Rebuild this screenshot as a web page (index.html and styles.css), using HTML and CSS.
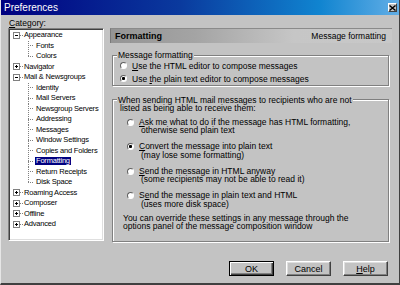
FILE: index.html
```html
<!DOCTYPE html>
<html>
<head>
    <title>Preferences</title>
    <link rel="stylesheet" href="styles.css">
</head>
<body>
    <div class="window">
        <div class="titlebar">
            <span class="title">Preferences</span>
            <span class="close">
                <svg width="7" height="6" viewBox="0 0 7 6"><path d="M0.5 0.5L6.5 5.5M6.5 0.5L0.5 5.5" stroke="#000" stroke-width="1.4"/></svg>
            </span>
        </div>

        <div class="main">
            <div class="sidebar">
                <div class="cat-label"><u>C</u>ategory:</div>
                <ul class="tree">
                    <li class="row top"><span class="exp open"></span><span class="stub"></span><span class="label">Appearance</span></li>
                    <li class="row child"><span class="label">Fonts</span></li>
                    <li class="row child last"><span class="label">Colors</span></li>
                    <li class="row top"><span class="exp"></span><span class="stub"></span><span class="label">Navigator</span></li>
                    <li class="row top"><span class="exp open"></span><span class="stub"></span><span class="label">Mail &amp; Newsgroups</span></li>
                    <li class="row child"><span class="label">Identity</span></li>
                    <li class="row child"><span class="label">Mail Servers</span></li>
                    <li class="row child"><span class="label">Newsgroup Servers</span></li>
                    <li class="row child"><span class="label">Addressing</span></li>
                    <li class="row child"><span class="label">Messages</span></li>
                    <li class="row child"><span class="label">Window Settings</span></li>
                    <li class="row child"><span class="label">Copies and Folders</span></li>
                    <li class="row child"><span class="label selected">Formatting</span></li>
                    <li class="row child"><span class="label">Return Receipts</span></li>
                    <li class="row child last"><span class="label">Disk Space</span></li>
                    <li class="row top"><span class="exp"></span><span class="stub"></span><span class="label">Roaming Access</span></li>
                    <li class="row top"><span class="exp"></span><span class="stub"></span><span class="label">Composer</span></li>
                    <li class="row top"><span class="exp"></span><span class="stub"></span><span class="label">Offline</span></li>
                    <li class="row top"><span class="exp"></span><span class="stub"></span><span class="label">Advanced</span></li>
                </ul>
            </div>

            <div class="panel">
                <div class="panel-head">
                    <span class="head-title">Formatting</span>
                    <span class="head-sub">Message formatting</span>
                </div>

                <div class="group">
                    <div class="legend">Message formatting</div>
                    <div class="choice">
                        <span class="radio"></span>
                        <span><u>U</u>se the HTML editor to compose messages</span>
                    </div>
                    <div class="choice">
                        <span class="radio on"></span>
                        <span>Use <u>t</u>he plain text editor to compose messages</span>
                    </div>
                </div>

                <div class="group send">
                    <div class="legend">When sending HTML mail messages to recipients who are not</div>
                    <div class="legend-more">listed as being able to receive them:</div>

                    <div class="option">
                        <span class="radio"></span>
                        <div>
                            <div><u>A</u>sk me what to do if the message has HTML formatting,</div>
                            <div class="more">otherwise send plain text</div>
                        </div>
                    </div>
                    <div class="option">
                        <span class="radio on"></span>
                        <div>
                            <div><u>C</u>onvert the message into plain text</div>
                            <div class="more">(may lose some formatting)</div>
                        </div>
                    </div>
                    <div class="option">
                        <span class="radio"></span>
                        <div>
                            <div><u>S</u>end the message in HTML anyway</div>
                            <div class="more">(some recipients may not be able to read it)</div>
                        </div>
                    </div>
                    <div class="option">
                        <span class="radio"></span>
                        <div>
                            <div>S<u>e</u>nd the message in plain text and HTML</div>
                            <div class="more">(uses more disk space)</div>
                        </div>
                    </div>

                    <div class="note">
                        <div>You can override these settings in any message through the</div>
                        <div>options panel of the message composition window</div>
                    </div>
                </div>
            </div>
        </div>

        <div class="buttons">
            <button class="btn default">OK</button>
            <button class="btn">Cancel</button>
            <button class="btn"><u>H</u>elp</button>
        </div>
    </div>
</body>
</html>
```

FILE: styles.css
```css
body {
    margin: 0;
    font-family: "Liberation Sans", Arial, sans-serif;
    font-size: 8.5px;
    color: #000;
    background: #c3c3c3;
}
.window {
    width: 400px;
    height: 285px;
    box-sizing: border-box;
    background: #c3c3c3;
    border-left: 1px solid #e6e6e6;
    border-right: 1px solid #404040;
    border-bottom: 2px solid #404040;
}
.titlebar {
    height: 15px;
    display: flex;
    align-items: center;
    justify-content: space-between;
    padding: 0 2px 0 3px;
    background: linear-gradient(to right, #000080, #0a3a9e 45%, #1084d0 80%, #62aee6);
}
.title {
    color: #fff;
    font-size: 10px;
}
.close {
    width: 9px;
    height: 9px;
    box-sizing: border-box;
    background: #c3c3c3;
    border: 1px solid;
    border-color: #fff #404040 #404040 #fff;
    display: flex;
    align-items: center;
    justify-content: center;
}
.close svg {
    display: block;
}

/* dialog body */
.main {
    display: flex;
    height: 226px;
    box-sizing: border-box;
    padding: 3px 0 0 7px;
}
.sidebar {
    width: 96px;
}
.cat-label {
    font-family: "Liberation Sans Narrow", "Arial Narrow", sans-serif;
    font-size: 8.5px;
    line-height: 10px;
    padding-left: 1px;
}
.tree {
    list-style: none;
    margin: 0;
    padding: 1px 0 0 1px;
    height: 213px;
    box-sizing: border-box;
    overflow: hidden;
    background: #fff;
    border: 1px solid;
    border-color: #808080 #fff #fff #808080;
    box-shadow: inset 1px 1px #404040, inset -1px -1px #dfdfdf;
    font-family: "Liberation Sans Narrow", "Arial Narrow", sans-serif;
    font-size: 7.5px;
    letter-spacing: -0.2px;
}
.row {
    height: 10.5px;
    display: flex;
    align-items: center;
    white-space: nowrap;
}
.row.top {
    padding-left: 3px;
}
.exp {
    width: 7px;
    height: 7px;
    box-sizing: border-box;
    border: 1px solid #808080;
    background:
        linear-gradient(#000, #000) center / 1px 3px no-repeat,
        linear-gradient(#000, #000) center / 3px 1px no-repeat,
        #fff;
}
.exp.open {
    background:
        linear-gradient(#000, #000) center / 3px 1px no-repeat,
        #fff;
}
.stub {
    width: 3px;
    height: 1px;
    background: repeating-linear-gradient(to right, #808080 0 1px, transparent 1px 2px);
}
.label {
    padding: 0 1px;
    line-height: 8px;
}
.row.child {
    padding-left: 25px;
    background:
        repeating-linear-gradient(to bottom, #808080 0 1px, transparent 1px 2px) 18px 0 / 1px 100% no-repeat,
        repeating-linear-gradient(to right, #808080 0 1px, transparent 1px 2px) 18px 50% / 6px 1px no-repeat;
}
.row.child.last {
    background:
        repeating-linear-gradient(to bottom, #808080 0 1px, transparent 1px 2px) 18px 0 / 1px 50% no-repeat,
        repeating-linear-gradient(to right, #808080 0 1px, transparent 1px 2px) 18px 50% / 6px 1px no-repeat;
}
.label.selected {
    background: #000080;
    color: #fff;
}

/* right panel */
.panel {
    width: 282px;
    margin-left: 6px;
    padding-top: 10px;
}
.panel-head {
    height: 15px;
    box-sizing: border-box;
    display: flex;
    align-items: center;
    justify-content: space-between;
    padding: 0 6px 0 4px;
    border-left: 1px solid #7a7a7a;
    border-top: 1px solid #8a8a8a;
    background: linear-gradient(to right, #949494, #a4a4a4 30%, #c6c6c6 65%, #c8c8c8);
    font-family: "Liberation Sans Narrow", "Arial Narrow", sans-serif;
}
.head-title {
    font-weight: bold;
    font-size: 9px;
}
.head-sub {
    font-size: 8.5px;
}
.group {
    margin: 12px 3px 0 2px;
    border: 1px solid #808080;
    box-shadow: 1px 1px 0 #fff, inset 1px 1px 0 #fff;
}
.legend {
    width: fit-content;
    margin: -5px 0 -1px 4px;
    padding: 0 1px;
    line-height: 9px;
    background: #c3c3c3;
}
.choice {
    height: 13px;
    display: flex;
    align-items: center;
    gap: 5px;
    padding-left: 7px;
}
.radio {
    flex: none;
    width: 7px;
    height: 7px;
    box-sizing: border-box;
    border-radius: 50%;
    border: 1px solid;
    border-color: #606060 #fff #fff #606060;
    background: #fff;
}
.radio.on {
    background: radial-gradient(circle, #000 0 1.3px, #fff 1.8px);
}
.group.send {
    margin-top: 13px;
    padding-bottom: 10px;
}
.send .legend {
    margin: -4.25px 0 0 4px;
    line-height: 8.5px;
}
.legend-more {
    padding-left: 7px;
    line-height: 8.5px;
}
.option {
    display: flex;
    align-items: flex-start;
    gap: 5px;
    padding-left: 14px;
    margin-top: 7.5px;
    line-height: 8.5px;
}
.send .legend-more + .option {
    margin-top: 5px;
}
.option .radio {
    margin-top: 1px;
}
.more {
    padding-left: 2px;
}
.note {
    padding-left: 10px;
    margin-top: 5.5px;
    line-height: 8.5px;
}

/* buttons */
.buttons {
    display: flex;
    justify-content: flex-end;
    gap: 12px;
    margin-top: 20px;
    padding-right: 11px;
}
.btn {
    width: 45px;
    height: 15px;
    padding: 0;
    box-sizing: border-box;
    background: #c3c3c3;
    border: 1px solid;
    border-color: #fff #404040 #404040 #fff;
    box-shadow: inset -1px -1px #808080, inset 1px 1px #dfdfdf;
    font-family: "Liberation Sans Narrow", "Arial Narrow", sans-serif;
    font-size: 9px;
    color: #000;
}
.btn.default {
    border-color: #000;
    box-shadow: inset 1px 1px #fff, inset -1px -1px #404040, inset -2px -2px #808080;
}
```
